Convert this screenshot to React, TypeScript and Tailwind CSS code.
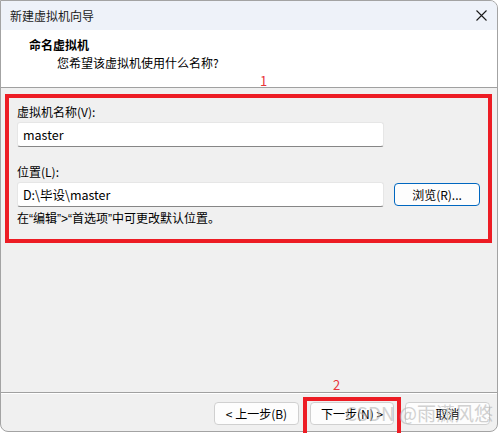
import React from "react";

const font = { fontFamily: '"Noto Sans CJK SC", "Noto Sans", sans-serif' };
const q = { fontFamily: '"Liberation Sans", sans-serif' };

export default function App() {
  return (
    <div className="w-[499px] h-[433px] bg-white relative overflow-hidden" style={font}>
      <div className="w-[498px] h-[432px] border border-[#a3a3a3] rounded-tr-[8px] rounded-b-[8px] overflow-hidden flex flex-col bg-[#f0f0f0] text-[12px] leading-[16px] text-black">
        {/* title bar */}
        <div className="h-[29px] shrink-0 bg-[#eef2f9] flex items-center justify-between pl-[9px] pr-[9px]">
          <span className="text-[12px] text-[#1a1a1a]">新建虚拟机向导</span>
          <svg width="11" height="11" viewBox="0 0 11 11" className="mr-[1px]">
            <path d="M0.5 0.5 L10.5 10.5 M10.5 0.5 L0.5 10.5" stroke="#1a1a1a" strokeWidth="1.1" fill="none" />
          </svg>
        </div>
        {/* header */}
        <div className="h-[58px] shrink-0 bg-white border-b border-[#a0a0a0] relative">
          <div className="pl-[28px] pt-[7px] font-bold text-[12px] leading-[16px]">命名虚拟机</div>
          <div className="pl-[56px] pt-[2px] text-[12px] leading-[16px]">您希望该虚拟机使用什么名称?</div>
          <span className="absolute left-[259px] top-[44px] text-[13px] leading-[14px] text-[#e8343a]">1</span>
        </div>
        {/* body */}
        <div className="flex-1 flex flex-col">
          <div className="ml-[4px] mt-[6px] w-[487px] h-[149px] border-4 border-[#ed1c24] px-[8px] pt-[6px]">
            <div className="leading-[16px]">虚拟机名称(V):</div>
            <div className="mt-[2px] w-[367px] h-[25px] bg-white border border-[#e6e6e6] border-b-[#868686] rounded-[3px] flex items-center px-[5px] text-[12.5px]">
              master
            </div>
            <div className="mt-[17px] leading-[16px]">位置(L):</div>
            <div className="mt-[2px] flex items-center">
              <div className="w-[367px] h-[25px] bg-white border border-[#e6e6e6] border-b-[#868686] rounded-[3px] flex items-center px-[5px] text-[12.5px]">
                D:\毕设\master
              </div>
              <div className="ml-[10px] w-[86px] h-[23px] border border-[#0067c0] rounded-[4px] bg-[#fdfdfd] flex items-center justify-center">
                浏览(R)...
              </div>
            </div>
            <div className="mt-[3px] leading-[16px]">
              在<span style={q}>“</span>编辑<span style={q}>”&gt;“</span>首选项<span style={q}>”</span>中可更改默认位置。
            </div>
          </div>
        </div>
        {/* footer */}
        <div className="h-[39px] shrink-0 border-t border-[#a0a0a0]">
          <div className="h-px bg-white" />
          <div className="mt-[8px] flex justify-end gap-[11px] pr-[7px]">
            <div className="w-[85px] h-[23px] border border-[#d0d0d0] rounded-[4px] bg-[#fdfdfd] flex items-center justify-center">
              &lt; 上一步(B)
            </div>
            <div className="w-[84px] h-[23px] border border-[#d0d0d0] rounded-[4px] bg-[#fdfdfd] flex items-center justify-center">
              下一步(N) &gt;
            </div>
            <div className="w-[85px] h-[23px] border border-[#d0d0d0] rounded-[4px] bg-[#fdfdfd] flex items-center justify-center">
              取消
            </div>
          </div>
        </div>
      </div>
      {/* annotation 2 */}
      <span className="absolute left-[333px] top-[378px] text-[13px] leading-[14px] text-[#e8343a]">2</span>
      <div className="absolute left-[303px] top-[397px] w-[98px] h-[40px] border-4 border-[#ed1c24]" />
      {/* watermark */}
      <span className="absolute left-[345px] top-[401px] text-[19px] leading-[24px] text-[#b4b4b4] opacity-60 whitespace-nowrap">
        CSDN @雨潇风悠
      </span>
    </div>
  );
}
